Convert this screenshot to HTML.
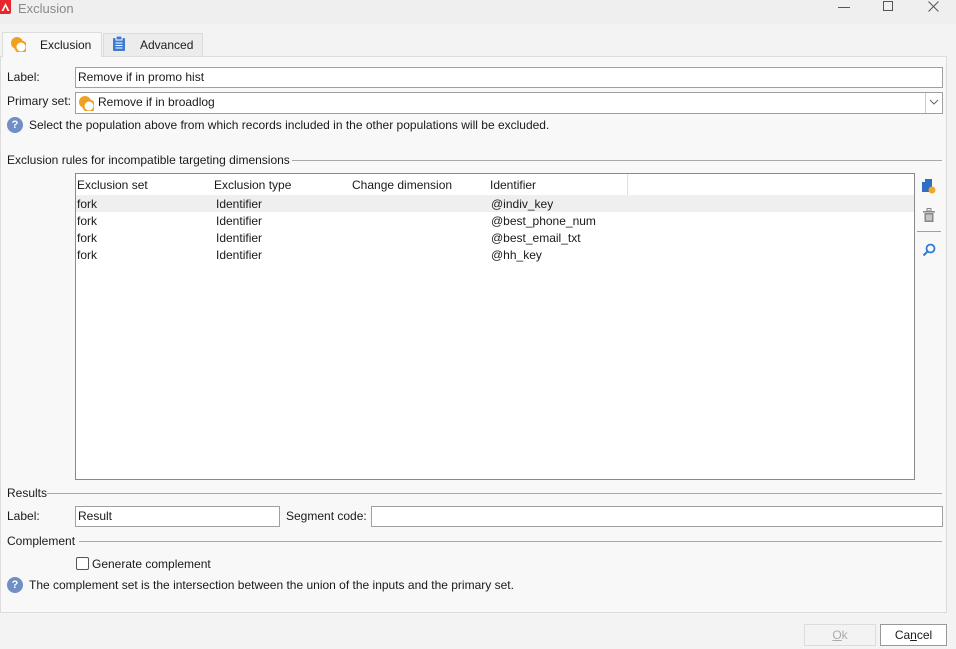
<!DOCTYPE html>
<html><head><meta charset="utf-8"><style>
*{box-sizing:border-box;margin:0;padding:0}
body{width:956px;height:649px;background:#f3f3f3;font-family:"Liberation Sans",sans-serif;font-size:12px;color:#1a1a1a;position:relative;overflow:hidden}
.a{position:absolute;white-space:nowrap}
.inp{position:absolute;background:#fff;border:1px solid #a0a0a0;height:21px;padding:2px 2px;line-height:15px}
.hr{position:absolute;height:1px;background:#a8a8a8}
.q{position:absolute;width:16px;height:16px;border-radius:50%;background:#6f8fc5;color:#fff;font-weight:bold;font-size:11px;text-align:center;line-height:16px}
.coin{position:absolute;width:16px;height:16px}
</style></head><body>
<div class="a" style="left:0;top:0;width:956px;height:24px;background:#efefef"></div>
<div class="a" style="left:0;top:0;width:11px;height:14px;background:#e8262b;border-radius:0 0 2px 0"></div>
<svg class="a" style="left:1px;top:2px" width="9" height="10"><path d="M4.5 1 L8.5 9 L6.5 9 L4.5 4.5 L2.5 9 L0.5 9Z" fill="#fff"/></svg>
<div class="a" style="left:18px;top:1px;font-size:13px;color:#8a8a8a">Exclusion</div>
<div class="a" style="left:838px;top:7px;width:12px;height:1px;background:#555"></div>
<div class="a" style="left:883px;top:1px;width:10px;height:10px;border:1px solid #555"></div>
<svg class="a" style="left:928px;top:1px" width="11" height="11"><path d="M0.5 0.5L10.5 10.5M10.5 0.5L0.5 10.5" stroke="#555" stroke-width="1"/></svg>
<div class="a" style="left:0;top:56px;width:947px;height:557px;background:#f8f8f8;border:1px solid #dcdcdc"></div>
<div class="a" style="left:2px;top:32px;width:100px;height:25px;background:#f8f8f8;border:1px solid #dcdcdc;border-bottom:none"></div>
<div class="a" style="left:103px;top:33px;width:100px;height:23px;background:#ececec;border:1px solid #dcdcdc;border-bottom:none"></div>
<svg class="coin" style="left:10px;top:36px" width="18" height="18"><circle cx="7" cy="7" r="6" fill="#f0a020"/><circle cx="11" cy="11" r="5.5" fill="#fff" stroke="#f0a020" stroke-width="2"/></svg>
<div class="a" style="left:40px;top:38px">Exclusion</div>
<svg class="a" style="left:112px;top:36px" width="14" height="16"><rect x="1" y="2" width="12" height="13" rx="1" fill="#3d7bd0"/><rect x="4" y="0" width="6" height="4" fill="#3d7bd0" stroke="#fff" stroke-width="1"/><path d="M3.5 7h7M3.5 9.5h7M3.5 12h7" stroke="#fff" stroke-width="1"/></svg>
<div class="a" style="left:140px;top:38px">Advanced</div>
<div class="a" style="left:7px;top:70px">Label:</div>
<div class="inp" style="left:75px;top:67px;width:868px">Remove if in promo hist</div>
<div class="a" style="left:7px;top:94px">Primary set:</div>
<div class="inp" style="left:75px;top:92px;width:868px;height:22px;padding-left:22px">Remove if in broadlog</div>
<svg class="coin" style="left:78px;top:95px" width="18" height="18"><circle cx="7" cy="7" r="6" fill="#f0a020"/><circle cx="11" cy="11" r="5.5" fill="#fff" stroke="#f0a020" stroke-width="2"/></svg>
<div class="a" style="left:925px;top:93px;width:1px;height:20px;background:#ccc"></div>
<svg class="a" style="left:929px;top:99px" width="10" height="7"><path d="M1 1L5 5L9 1" stroke="#666" fill="none"/></svg>
<div class="q" style="left:7px;top:117px">?</div>
<div class="a" style="left:29px;top:118px">Select the population above from which records included in the other populations will be excluded.</div>
<div class="a" style="left:7px;top:153px">Exclusion rules for incompatible targeting dimensions</div>
<div class="hr" style="left:292px;top:160px;width:650px"></div>
<div class="a" style="left:75px;top:173px;width:840px;height:307px;background:#fff;border:1px solid #8a8a8a"></div>
<div class="a" style="left:76px;top:195px;width:838px;height:17px;background:#efefef"></div>
<div class="a" style="left:627px;top:174px;width:1px;height:21px;background:#e0e0e0"></div>
<div class="a" style="left:77px;top:178px">Exclusion set</div>
<div class="a" style="left:214px;top:178px">Exclusion type</div>
<div class="a" style="left:352px;top:178px">Change dimension</div>
<div class="a" style="left:490px;top:178px">Identifier</div>
<div class="a" style="left:77px;top:197px">fork</div><div class="a" style="left:216px;top:197px">Identifier</div><div class="a" style="left:491px;top:197px">@indiv_key</div>
<div class="a" style="left:77px;top:214px">fork</div><div class="a" style="left:216px;top:214px">Identifier</div><div class="a" style="left:491px;top:214px">@best_phone_num</div>
<div class="a" style="left:77px;top:231px">fork</div><div class="a" style="left:216px;top:231px">Identifier</div><div class="a" style="left:491px;top:231px">@best_email_txt</div>
<div class="a" style="left:77px;top:248px">fork</div><div class="a" style="left:216px;top:248px">Identifier</div><div class="a" style="left:491px;top:248px">@hh_key</div>
<svg class="a" style="left:921px;top:178px" width="16" height="16"><path d="M4 1H11V14H1V4Z" fill="#2e6fc4"/><path d="M1 4H4V1Z" fill="#fff"/><circle cx="11" cy="12" r="3.5" fill="#f5a623"/></svg>
<svg class="a" style="left:921px;top:207px" width="16" height="16"><rect x="2" y="4" width="12" height="1.5" fill="#888"/><rect x="6" y="1.5" width="4" height="2.5" fill="none" stroke="#888"/><path d="M3.5 6H12.5V15H3.5Z" fill="#888"/><path d="M6 7.5V13.5M8 7.5V13.5M10 7.5V13.5" stroke="#fff"/></svg>
<div class="a" style="left:917px;top:231px;width:24px;height:1px;background:#a0a0a0"></div>
<svg class="a" style="left:922px;top:243px" width="14" height="14"><circle cx="8.5" cy="5.5" r="4" fill="none" stroke="#2e7bd0" stroke-width="1.8"/><path d="M5.5 8.5L1.5 12.5" stroke="#2e7bd0" stroke-width="2"/></svg>
<div class="a" style="left:7px;top:486px">Results</div>
<div class="hr" style="left:47px;top:493px;width:895px"></div>
<div class="a" style="left:7px;top:509px">Label:</div>
<div class="inp" style="left:75px;top:506px;width:205px">Result</div>
<div class="a" style="left:286px;top:509px">Segment code:</div>
<div class="inp" style="left:371px;top:506px;width:572px"></div>
<div class="a" style="left:7px;top:534px">Complement</div>
<div class="hr" style="left:79px;top:541px;width:863px"></div>
<div class="a" style="left:76px;top:557px;width:13px;height:13px;border:1px solid #555;border-radius:2px;background:#fff"></div>
<div class="a" style="left:92px;top:557px">Generate complement</div>
<div class="q" style="left:7px;top:577px">?</div>
<div class="a" style="left:29px;top:578px">The complement set is the intersection between the union of the inputs and the primary set.</div>
<div class="a" style="left:804px;top:624px;width:72px;height:22px;border:1px solid #dcdcdc;background:#f3f3f3;color:#aaa;text-align:center;line-height:20px"><u>O</u>k</div>
<div class="a" style="left:880px;top:624px;width:67px;height:22px;border:1px solid #999;background:#fff;text-align:center;line-height:20px">Ca<u>n</u>cel</div>
</body></html>
